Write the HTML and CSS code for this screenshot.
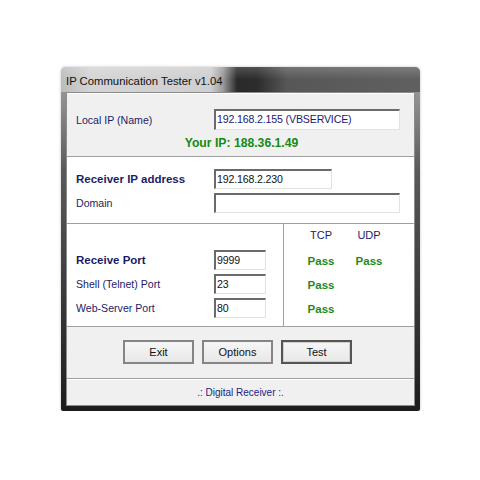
FILE: index.html
```html
<!DOCTYPE html>
<html>
<head>
<meta charset="utf-8">
<link rel="stylesheet" href="styles.css">
</head>
<body>
<div class="page">
  <div class="window">
    <div class="titlebar"><span class="title">IP Communication Tester v1.04</span></div>
    <div class="client">
      <div class="sec sec-local">
        <div class="row">
          <span class="label">Local IP (Name)</span>
          <div class="field field-wide field-blue">192.168.2.155 (VBSERVICE)</div>
        </div>
        <div class="yourip">Your IP: 188.36.1.49</div>
      </div>
      <div class="sep"></div>
      <div class="sec sec-recv">
        <div class="row">
          <span class="label bold">Receiver IP address</span>
          <div class="field field-mid">192.168.2.230</div>
        </div>
        <div class="row">
          <span class="label">Domain</span>
          <div class="field field-wide"></div>
        </div>
      </div>
      <div class="sep"></div>
      <div class="sec sec-ports">
        <div class="ports-left">
          <div class="row">
            <span class="label bold">Receive Port</span>
            <div class="field field-small">9999</div>
          </div>
          <div class="row">
            <span class="label">Shell (Telnet) Port</span>
            <div class="field field-small">23</div>
          </div>
          <div class="row">
            <span class="label">Web-Server Port</span>
            <div class="field field-small">80</div>
          </div>
        </div>
        <div class="ports-right">
          <span class="head">TCP</span><span class="head">UDP</span>
          <span class="pass">Pass</span><span class="pass">Pass</span>
          <span class="pass">Pass</span><span></span>
          <span class="pass">Pass</span><span></span>
        </div>
      </div>
      <div class="sep"></div>
      <div class="sec sec-buttons">
        <div class="btn">Exit</div>
        <div class="btn">Options</div>
        <div class="btn btn-default">Test</div>
      </div>
      <div class="sep"></div>
      <div class="sec sec-footer">.: Digital Receiver :.</div>
    </div>
  </div>
</div>
</body>
</html>
```
FILE: styles.css
```css
html, body {
  margin: 0;
  padding: 0;
  background: #ffffff;
}
body {
  font-family: "Liberation Sans", Arial, sans-serif;
  font-size: 11px;
  color: #000;
}
.page {
  padding: 67px 0 0 61px;
}
.window {
  width: 359px;
  box-sizing: border-box;
  padding: 0 5px 5px 5px;
  border-radius: 5px 5px 2px 2px;
  background: linear-gradient(to bottom, #a8a8a8 0%, #5a5a5a 30%, #333 75%, #1c1c1c 100%);
  display: flex;
  flex-direction: column;
  box-shadow: 0 0 3px rgba(0,0,0,0.25);
}
.titlebar {
  height: 25px;
  margin: 0 -5px;
  padding-left: 5px;
  border-radius: 5px 5px 0 0;
  display: flex;
  align-items: center;
  background:
    linear-gradient(to bottom, rgba(255,255,255,0.18), rgba(255,255,255,0) 50%),
    linear-gradient(to right, #bcbcbc 0px, #d4d4d4 30px, #cfcfcf 150px, #9a9a9a 162px, #2a2a2a 176px, #2c2c2c 196px, #575757 226px, #606060 100%);
}
.title {
  font-size: 11.3px;
  color: #111;
  padding-top: 2px;
}
.client {
  border: 1px solid #8c8c8c;
  background: #ffffff;
  display: flex;
  flex-direction: column;
}
.sep {
  height: 1px;
  background: #a0a0a0;
}
.sec {
  box-sizing: border-box;
}
.sec-local {
  background: #f0f0f0;
  height: 63px;
  padding: 15px 0 0 9px;
  border-top: 1px solid #fff;
  display: flex;
  flex-direction: column;
}
.row {
  display: flex;
  align-items: center;
  height: 20px;
}
.label {
  width: 138px;
  color: #1c1c66;
  font-size: 10.6px;
}
.label.bold {
  font-weight: bold;
  font-size: 11.5px;
}
.field {
  box-sizing: border-box;
  height: 20px;
  background: #fff;
  border-top: 2px solid #6a6a6a;
  border-left: 2px solid #6a6a6a;
  border-right: 1px solid #e2e2e2;
  border-bottom: 1px solid #e2e2e2;
  padding: 1px 0 0 1px;
  font-size: 10.6px;
  letter-spacing: -0.15px;
  line-height: 14px;
  color: #111;
  white-space: nowrap;
}
.sec-local .row {
  height: 21px;
}
.sec-local .field {
  height: 21px;
}
.field-blue {
  color: #202070;
}
.field-wide { width: 186px; }
.field-mid { width: 118px; }
.field-small { width: 52px; }
.yourip {
  margin-top: 6px;
  margin-left: -7px;
  text-align: center;
  font-weight: bold;
  color: #168a16;
  font-size: 12.2px;
}
.sec-recv {
  height: 66px;
  padding: 12px 0 0 9px;
  display: flex;
  flex-direction: column;
  gap: 4px;
}
.sec-ports {
  height: 102px;
  display: flex;
}
.ports-left {
  width: 217px;
  box-sizing: border-box;
  padding: 26px 0 0 9px;
  border-right: 1px solid #a0a0a0;
  display: flex;
  flex-direction: column;
  gap: 4px;
}
.ports-right {
  display: grid;
  grid-template-columns: 48px 48px;
  grid-template-rows: 25px 24px 24px 24px;
  padding: 0 0 0 13px;
  align-items: center;
  justify-items: center;
}
.head {
  color: #1c1c66;
  font-size: 11px;
  align-self: start;
  padding-top: 5px;
}
.pass {
  font-weight: bold;
  color: #1e8a1e;
  font-size: 11.5px;
}
.sec-buttons {
  height: 51px;
  background: #f0f0f0;
  display: flex;
  align-items: center;
  gap: 8px;
  padding: 0 0 1px 56px;
}
.btn {
  box-sizing: border-box;
  width: 71px;
  height: 24px;
  border: 2px solid #858585;
  background: linear-gradient(to bottom, #f6f6f6, #e8e8e8);
  display: flex;
  align-items: center;
  justify-content: center;
  font-size: 11px;
  color: #111;
}
.btn-default {
  border-color: #555;
  box-shadow: inset 0 0 0 1px #d0d0d0;
}
.sec-footer {
  height: 26px;
  background: #f0f0f0;
  border-top: 1px solid #fff;
  display: flex;
  align-items: center;
  justify-content: center;
  color: #232380;
  font-size: 10px;
}
```
